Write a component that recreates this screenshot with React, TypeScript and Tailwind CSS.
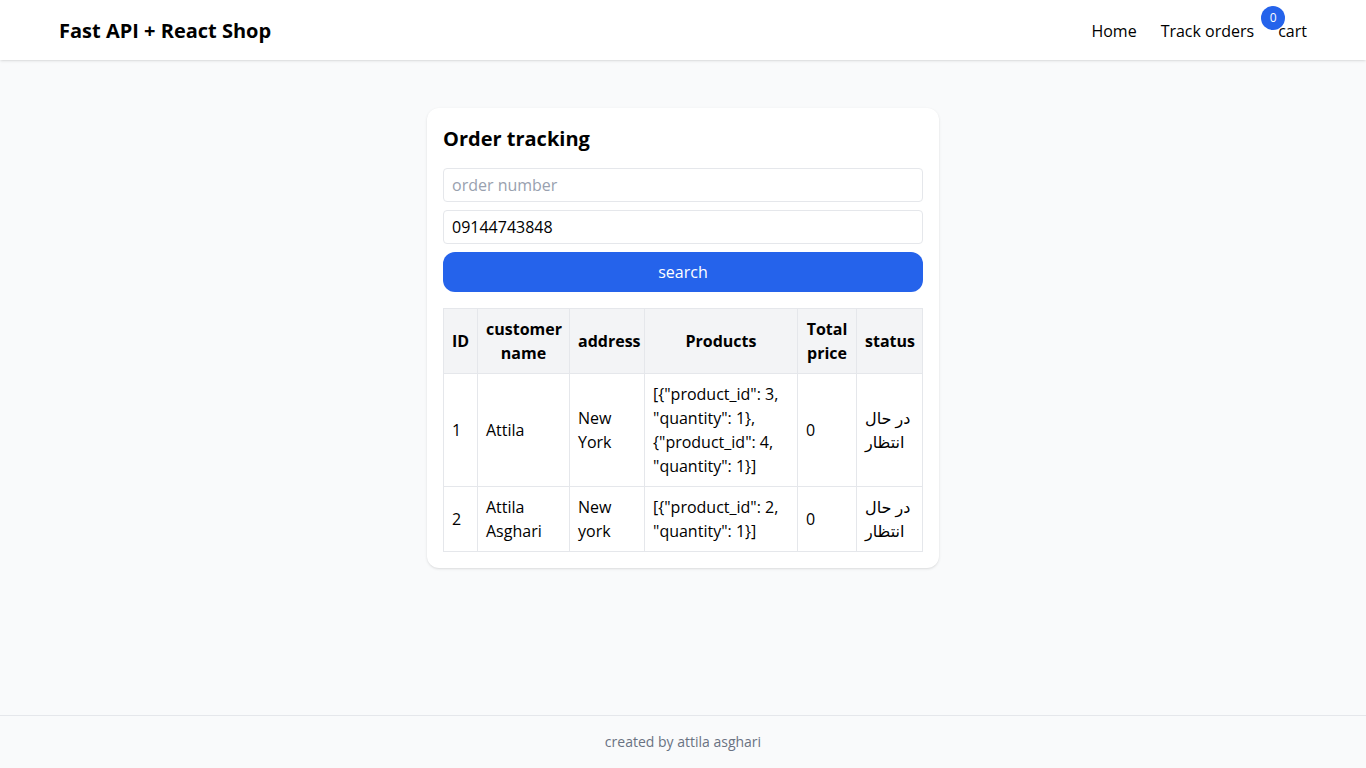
import React from 'react';

const orders = [
  {
    id: 1,
    name: 'Attila',
    address: 'New York',
    products: '[{"product_id": 3, "quantity": 1}, {"product_id": 4, "quantity": 1}]',
    total: 0,
    status: 'در حال انتظار',
  },
  {
    id: 2,
    name: 'Attila Asghari',
    address: 'New york',
    products: '[{"product_id": 2, "quantity": 1}]',
    total: 0,
    status: 'در حال انتظار',
  },
];

export default function App() {
  return (
    <div className="min-h-screen flex flex-col bg-[#f9fafb] text-black font-['Open_Sans','DejaVu_Sans',sans-serif]">
      <header className="bg-white shadow-sm h-[60px]">
        <div className="max-w-7xl mx-auto px-4 h-full flex items-center justify-between pt-[2px]">
          <h1 className="text-xl font-bold">Fast API + React Shop</h1>
          <nav className="flex items-center gap-6 text-base">
            <a>Home</a>
            <a>Track orders</a>
            <a className="relative">
              <span className="absolute -top-[13px] -left-[17px] w-6 h-6 rounded-full bg-[#2563eb] text-white text-xs flex items-center justify-center">0</span>
              cart
            </a>
          </nav>
        </div>
      </header>

      <main className="flex-1 py-12 px-4">
        <div className="max-w-lg mx-auto bg-white rounded-xl shadow-sm p-4">
          <h2 className="text-xl font-bold pt-px mb-[15px]">Order tracking</h2>
          <div className="flex flex-col gap-2">
            <input
              className="w-full border border-gray-200 rounded px-2 py-1 text-base outline-none placeholder:text-gray-400"
              placeholder="order number"
            />
            <input
              className="w-full border border-gray-200 rounded px-2 py-1 text-base outline-none"
              defaultValue="09144743848"
            />
            <button className="w-full bg-[#2563eb] text-white rounded-xl py-2 text-base">search</button>
          </div>

          <table className="mt-4 w-full table-fixed border-collapse border border-gray-200 text-base">
            <thead className="bg-gray-100">
              <tr>
                <th className="w-[34px] border border-gray-200 p-2 font-bold">ID</th>
                <th className="w-[92px] border border-gray-200 p-2 font-bold">customer name</th>
                <th className="w-[75px] border border-gray-200 p-2 font-bold">address</th>
                <th className="w-[153px] border border-gray-200 p-2 font-bold">Products</th>
                <th className="w-[59px] border border-gray-200 p-2 font-bold">Total price</th>
                <th className="border border-gray-200 p-2 font-bold">status</th>
              </tr>
            </thead>
            <tbody>
              {orders.map(o => (
                <tr key={o.id}>
                  <td className="border border-gray-200 p-2">{o.id}</td>
                  <td className="border border-gray-200 p-2">{o.name}</td>
                  <td className="border border-gray-200 p-2">{o.address}</td>
                  <td className="border border-gray-200 p-2">{o.products}</td>
                  <td className="border border-gray-200 p-2">{o.total}</td>
                  <td className="border border-gray-200 p-2">{o.status}</td>
                </tr>
              ))}
            </tbody>
          </table>
        </div>
      </main>

      <footer className="border-t border-gray-200 py-4 text-center text-sm text-gray-500">
        created by attila asghari
      </footer>
    </div>
  );
}
